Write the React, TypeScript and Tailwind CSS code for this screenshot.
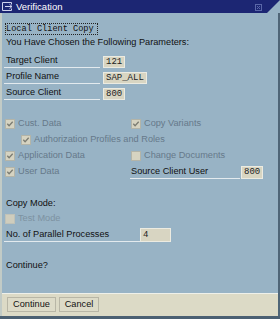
import React from "react";

const sans = "font-['Liberation_Sans',Arial,sans-serif]";
const mono = "font-['Liberation_Mono','Courier_New',monospace]";

function Box({ checked }: { checked: boolean }) {
  return (
    <span className="w-[10px] h-[10px] border border-[#b3b4a8] bg-[#d6d3c1] flex items-center justify-center shrink-0">
      {checked && (
        <svg width="8" height="8" viewBox="0 0 8 8">
          <path d="M1.3 3.8 L3.1 5.8 L6.7 1.8" stroke="#7b7c72" strokeWidth="1.3" fill="none" />
        </svg>
      )}
    </span>
  );
}

function Check({ checked, label, light }: { checked: boolean; label: string; light?: boolean }) {
  return (
    <div className="flex items-center gap-[3px] ml-[1px]">
      <Box checked={checked} />
      <span className={light ? "text-[#7f93a2]" : "text-[#66798a]"}>{label}</span>
    </div>
  );
}

function Field({ label, value }: { label: string; value: string }) {
  return (
    <div className="h-[16px] flex items-end">
      <div className="w-[96px] h-[14px] pl-[2px] flex items-center border-b border-[#e3eaee] text-[#111]">{label}</div>
      <div className={`ml-[3px] h-[12px] px-[2px] bg-[#d8d5c2] border border-[#ecebe1] flex items-center text-[9px] text-[#222] ${mono}`}>{value}</div>
    </div>
  );
}

export default function App() {
  return (
    <div className={`w-[280px] h-[319px] bg-[#98b3c5] flex flex-col text-[9.2px] leading-none ${sans}`}>
      <div className="h-[13px] bg-[#1c2673] [clip-path:polygon(0_0,100%_0,calc(100%-13px)_100%,0_100%)] flex items-center relative shrink-0">
        <svg className="ml-[1px]" width="13" height="11" viewBox="0 0 13 11">
          <path d="M1.5 1.5 H10.5 V3.5 M1.5 1.5 V9.5 H10.5 V7.5" stroke="#cfd3ee" strokeWidth="1" fill="none" />
          <path d="M4 5.5 H11 M8.5 3.3 L11 5.5 L8.5 7.7" stroke="#cfd3ee" strokeWidth="1" fill="none" />
        </svg>
        <span className="ml-[2px] text-white text-[9.5px]">Verification</span>
        <svg className="absolute left-[255px] top-[4px]" width="7" height="7" viewBox="0 0 7 7">
          <rect x="0.5" y="0.5" width="6" height="6" stroke="#5a67a8" fill="none" />
          <path d="M2 2 L5 5 M5 2 L2 5" stroke="#5a67a8" strokeWidth="1" />
        </svg>
      </div>
      <div className="flex-1 flex flex-col border-l-[2px] border-l-[#c2cbc6] border-r-[2px] border-r-[#4f6577]">
        <div className="flex-1 flex flex-col pl-[2px]">
          <div className={`mt-[10px] ml-[1px] w-[93px] h-[12px] border border-dotted border-[#222] flex items-center whitespace-nowrap overflow-hidden text-[8.6px] text-[#111] ${mono}`}>Local Client Copy</div>
          <div className="mt-[2px] h-[12px] pl-[2px] flex items-center text-[#111]">You Have Chosen the Following Parameters:</div>
          <div className="mt-[3px]">
            <Field label="Target Client" value="121" />
            <Field label="Profile Name" value="SAP_ALL" />
            <Field label="Source Client" value="800" />
          </div>

          <div className="mt-[16px] grid grid-cols-[126px_1fr] auto-rows-[16px] items-center">
            <Check checked label="Cust. Data" />
            <Check checked label="Copy Variants" />
            <div className="col-span-2 ml-[16px]">
              <Check checked label="Authorization Profiles and Roles" />
            </div>
            <Check checked label="Application Data" />
            <Check checked={false} label="Change Documents" />
            <Check checked label="User Data" />
            <div className="flex items-center">
              <div className="w-[110px] h-[14px] pl-[1px] flex items-center border-b border-[#e3eaee] text-[#111]">Source Client User</div>
              <div className={`ml-[1px] h-[13px] px-[2px] bg-[#d8d5c2] border border-[#ecebe1] flex items-center text-[9px] text-[#222] ${mono}`}>800</div>
            </div>
          </div>

          <div className="mt-[17px] h-[14px] pl-[2px] flex items-center text-[#111]">Copy Mode:</div>
          <div className="h-[15px] flex items-center">
            <div className="flex items-center gap-[3px] ml-[1px]">
              <span className="w-[10px] h-[10px] border border-[#c0c2b8] bg-[#cfcdbd] shrink-0" />
              <span className="text-[#7d92a1]">Test Mode</span>
            </div>
          </div>
          <div className="h-[16px] flex items-end">
            <div className="w-[136px] h-[14px] pl-[2px] flex items-center border-b border-[#e3eaee] text-[#111]">No. of Parallel Processes</div>
            <div className={`w-[31px] h-[14px] px-[2px] bg-[#d8d5c2] border border-[#ecebe1] flex items-center text-[9px] text-[#222] ${mono}`}>4</div>
          </div>
          <div className="mt-[18px] h-[12px] pl-[2px] flex items-center text-[#111]">Continue?</div>
        </div>
        <div className="h-[23px] border-t border-[#eef0ea] bg-[#dcdac6] flex items-start pt-[3px] pl-[5px] gap-[3px] shrink-0">
          <button className="w-[49px] h-[15px] border border-[#b8b6a6] bg-[#dddbc8] text-[#111] flex items-center justify-center">Continue</button>
          <button className="w-[40px] h-[15px] border border-[#b8b6a6] bg-[#dddbc8] text-[#111] flex items-center justify-center">Cancel</button>
        </div>
      </div>
      <div className="h-[3px] bg-[#4b6072] shrink-0" />
    </div>
  );
}
